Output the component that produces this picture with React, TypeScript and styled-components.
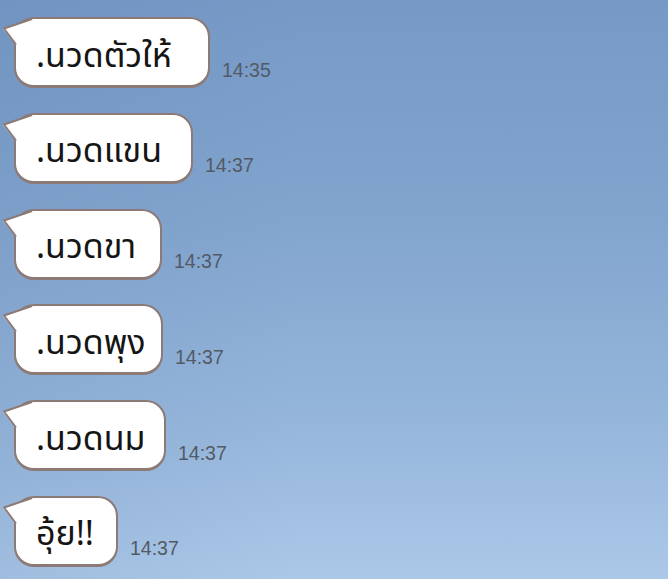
import React from "react";
import styled, { createGlobalStyle } from "styled-components";

const Global = createGlobalStyle`
  html, body { margin: 0; padding: 0; }
  body { width: 668px; height: 579px; overflow: hidden; }
`;

const Screen = styled.div`
  width: 668px;
  height: 579px;
  box-sizing: border-box;
  padding: 17px 0 0 14px;
  background:
    linear-gradient(90deg, rgba(70, 100, 150, 0.10) 0%, rgba(70, 100, 150, 0) 45%),
    linear-gradient(180deg, #7699c6 0%, #83a6cf 40%, #97b7dc 75%, #abc8e8 100%);
  display: flex;
  flex-direction: column;
  gap: 24.8px;
  font-family: "Noto Sans Thai", "Thonburi", "Noto Sans", "DejaVu Sans", sans-serif;
`;

const Row = styled.div`
  display: flex;
  align-items: flex-end;
  gap: 12px;
`;

const Bubble = styled.div<{ $w: number }>`
  position: relative;
  box-sizing: border-box;
  width: ${(p) => p.$w}px;
  height: 71px;
  background: #fff;
  border: 2px solid #8c7a76;
  border-bottom-width: 3px;
  border-radius: 20px;
  display: flex;
  align-items: center;
  padding: 8px 0 0 20px;
  font-size: 34px;
  color: #151515;
  white-space: nowrap;
`;

const Tail = styled.svg`
  position: absolute;
  left: -14px;
  top: -2px;
  overflow: visible;
`;

const Label = styled.span`
  position: relative;
`;

const Time = styled.span`
  font-family: "Liberation Sans", Arial, sans-serif;
  font-size: 19.5px;
  color: #535a66;
  line-height: 1;
  margin-bottom: 8px;
`;

const messages = [
  { text: ".นวดตัวให้", time: "14:35", w: 196 },
  { text: ".นวดแขน", time: "14:37", w: 179 },
  { text: ".นวดขา", time: "14:37", w: 148 },
  { text: ".นวดพุง", time: "14:37", w: 149 },
  { text: ".นวดนม", time: "14:37", w: 152 },
  { text: "อุ้ย!!", time: "14:37", w: 104 },
];

export default function App() {
  return (
    <>
      <Global />
      <Screen>
        {messages.map((m, i) => (
          <Row key={i}>
            <Bubble $w={m.w}>
              <Tail width="34" height="32" viewBox="0 0 34 32">
                <polygon points="30,2 1,12 14,28 32,28" fill="#fff" />
                <polyline
                  points="30,2 2,11.5 14,27.5"
                  fill="none"
                  stroke="#8c7a76"
                  strokeWidth="2"
                  strokeLinejoin="round"
                />
              </Tail>
              <Label>{m.text}</Label>
            </Bubble>
            <Time>{m.time}</Time>
          </Row>
        ))}
      </Screen>
    </>
  );
}
